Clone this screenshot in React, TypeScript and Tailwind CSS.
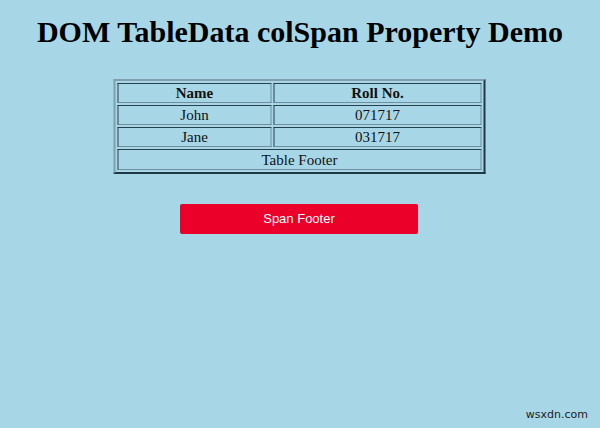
import React from 'react';

const rows = [
  { name: 'John', roll: '071717' },
  { name: 'Jane', roll: '031717' },
];

const cell = 'border border-[#6f8e9a] border-t-[#28404c] border-l-[#28404c] px-1 py-0 h-[20px] leading-[18px] text-center';

const App: React.FC = () => {
  return (
    <div className="relative w-[600px] h-[428px] bg-[#a7d7e7] overflow-hidden text-[#111]" style={{ fontFamily: '"Liberation Serif", serif' }}>
      <h1 className="pt-[15px] text-center text-[30px] font-bold leading-[34px] text-black">
        DOM TableData colSpan Property Demo
      </h1>

      <div className="mt-[30px] flex justify-center">
        <table className="w-[372px] border-separate border-spacing-[2px] border-2 border-[#7f9fab] border-r-[#1f3846] border-b-[#1f3846] text-[15px] -translate-x-[0.5px]">
          <thead>
            <tr>
              <th className={`${cell} w-[154px] font-bold`}>Name</th>
              <th className={`${cell} font-bold`}>Roll No.</th>
            </tr>
          </thead>
          <tbody>
            {rows.map((r) => (
              <tr key={r.name}>
                <td className={cell}>{r.name}</td>
                <td className={cell}>{r.roll}</td>
              </tr>
            ))}
            <tr>
              <td colSpan={2} className={`${cell} h-[21px]`}>Table Footer</td>
            </tr>
          </tbody>
        </table>
      </div>

      <div className="mt-[30px] flex justify-center">
        <button
          className="w-[238px] h-[30px] bg-[#ea0029] rounded-[2px] text-white text-[13px] -translate-x-[1px]"
          style={{ fontFamily: '"Liberation Sans", Arial, sans-serif' }}
        >
          Span Footer
        </button>
      </div>

      <div
        className="absolute right-[12px] bottom-[5px] text-[11px] text-[#222]"
        style={{ fontFamily: '"DejaVu Sans", sans-serif' }}
      >
        wsxdn.com
      </div>
    </div>
  );
};

export default App;
